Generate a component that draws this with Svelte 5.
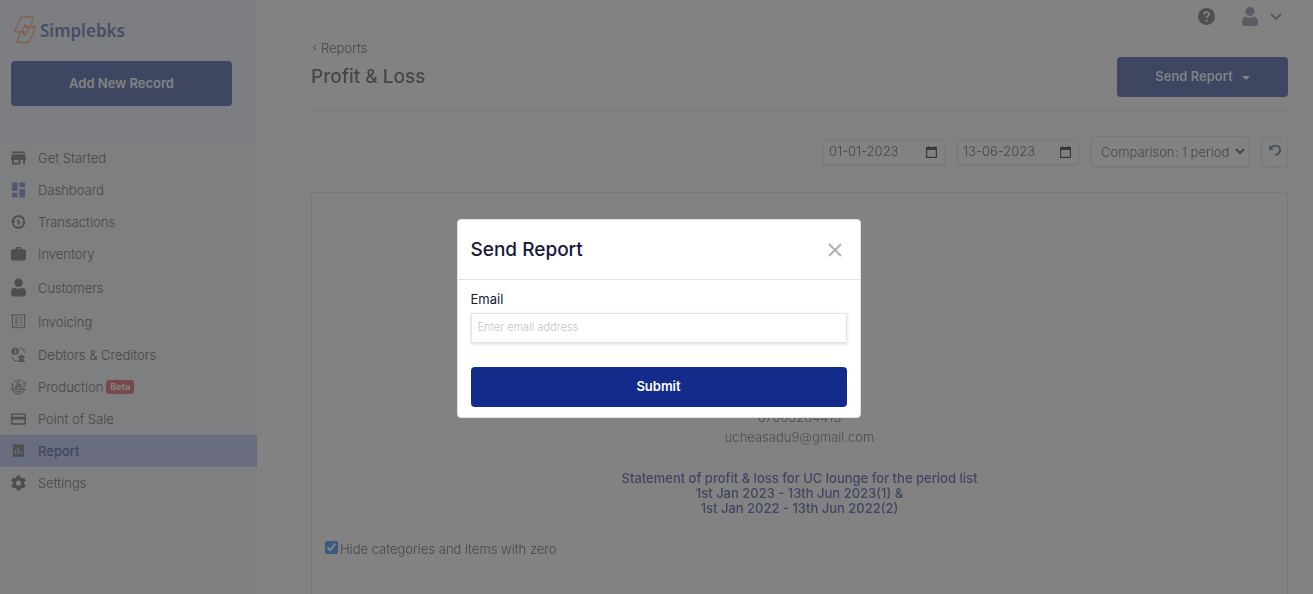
<script>
  let showModal = true;
  let email = '';
  let dateFrom = '01-01-2023';
  let dateTo = '13-06-2023';
  let comparison = 'Comparison: 1 period';
  let hideZero = true;

  const navItems = [
    { label: 'Get Started', icon: 'store', height: 16 },
    { label: 'Dashboard', icon: 'dashboard', height: 16 },
    { label: 'Transactions', icon: 'transactions', height: 16 },
    { label: 'Inventory', icon: 'bag', height: 16 },
    { label: 'Customers', icon: 'user', height: 21, viewBox: '0 0 16 19' },
    { label: 'Invoicing', icon: 'invoice', height: 19 },
    { label: 'Debtors & Creditors', icon: 'debtors', height: 19 },
    { label: 'Production', icon: 'production', height: 16, badge: 'Beta' },
    { label: 'Point of Sale', icon: 'card', height: 16 },
    { label: 'Report', icon: 'chart', height: 16, active: true },
    { label: 'Settings', icon: 'gear', height: 16 }
  ];

  function closeModal() {
    showModal = false;
  }

  function openModal() {
    showModal = true;
  }
</script>

<div class="page">
  <aside class="sidebar">
    <div class="brand-area">
      <a class="logo" href="#home">
        <svg width="22" height="28" viewBox="0 0 22 28" fill="none" stroke="#f58a48" stroke-width="1.3" stroke-linejoin="round">
          <path d="M8.500 1h9.500q1.500 0 1 1.500L17 9M11.500 16H2q-1.500 0-1-1.500L6.500 2.500Q7 1 8.500 1" />
          <path d="M11 11h9q1.500 0 1 1.500L15.500 25q-.6 1.500-2 1.500H4q-1.500 0-1-1.500l3.500-9" />
          <path d="M11.500 8.500l3.500 4-4 7-3.500-4z" />
        </svg>
        <span>Simplebks</span>
      </a>
      <button type="button" class="primary add-record">Add New Record</button>
    </div>

    <nav>
      {#each navItems as item}
        <a class="nav-item" class:active={item.active} href="#{item.icon}">
          <svg
            class="nav-icon"
            class:blue={item.icon === 'dashboard'}
            width="15"
            height={item.height}
            viewBox={item.viewBox || '0 0 16 16'}
          >
            {#if item.icon === 'store'}
              <path d="M1 1h14v2H1zM1 4h14l1 5v1h-1v5h-2v-5h-3v5H1v-5H0V9zM3 10v3h5v-3z" fill-rule="evenodd" />
            {:else if item.icon === 'dashboard'}
              <path d="M1 0h6v9H1zM9 0h6v5H9zM1 11h6v5H1zM9 7h6v9H9z" />
            {:else if item.icon === 'transactions'}
              <g fill="none" stroke="currentColor" stroke-width="2">
                <path d="M2 7C3 .5 12.500 0 14 6.500M14 9c-1 6.500-10.500 7-12 .5" />
              </g>
              <path d="M0 7h4.500L2 10zM11.500 9H16l-2.200-3z" />
              <path d="M9.300 6.200H7.500a.9.9 0 0 0 0 1.800h1a.9.9 0 0 1 0 1.800H6.700M8 5v6" fill="none" stroke="currentColor" />
            {:else if item.icon === 'bag'}
              <path d="M5 3V1.500L6 .5h4l1 1V3h3.500L16 4.500v9L14.500 15h-13L0 13.500v-9L1.500 3zM6.500 3h3V2h-3z" fill-rule="evenodd" />
            {:else if item.icon === 'user'}
              <circle cx="8" cy="4.500" r="4.500" />
              <path d="M3.500 9.500c2.500 1.700 6.500 1.700 9 0C15 10 16 12.500 16 16c0 2-1 3-3 3H3c-2 0-3-1-3-3 0-3.500 1-6 3.500-6.500z" />
            {:else if item.icon === 'invoice'}
              <g fill="none" stroke="currentColor">
                <path d="M0 1h16M1.500 1v14l1.600-1.200L4.700 15l1.600-1.200L8 15l1.600-1.200L11.200 15l1.600-1.200 1.700 1.200V1" />
                <path d="M4 4h4M10 4h2M4 6.500h4M10 6.500h2M4 9h4M10 9h2M4 11.500h4M10 11.500h2" />
              </g>
            {:else if item.icon === 'debtors'}
              <circle cx="4.500" cy="4.500" r="3.800" />
              <path d="M5.800 3H4a.8.800 0 0 0 0 1.500h1a.8.800 0 0 1 0 1.600H3.200M4.500 2v5" fill="none" stroke="#f0f4fa" stroke-width=".8" />
              <path d="M9 1c3 0 5.500 2.500 5.500 5.500M1 10c.3 3 2 4.500 5.500 5" fill="none" stroke="currentColor" />
              <path d="M7.500 10.500L11 8l3.500 2.500v1h-7zM8.500 12h5v2h-5zM7.500 14.500h7V16h-7z" />
            {:else if item.icon === 'production'}
              <g fill="none" stroke="currentColor">
                <path d="M3 3c3-3 8-3 10.500 0M0 4.500l3 1M1.500 6v3L0 10.500h16M2 11c1 6 11 6 12 0M4 13h8M6 10V7H4.500v3M6 7l4-2v5M8 7.500h3M12 6l3-3v3l-3 4" />
                <circle cx="7.500" cy="4.500" r="1.500" />
              </g>
            {:else if item.icon === 'card'}
              <path d="M1 2h14l1 1v10l-1 1H1l-1-1V3zM1.500 3.500v2h13v-2zM1.500 8.500v4h13v-4z" fill-rule="evenodd" />
            {:else if item.icon === 'chart'}
              <path d="M2 1h12v13H2zM4 7v4h1.500V7zM7 4v7h1.500V4zM10 8.500V11h1.500V8.500z" fill-rule="evenodd" />
            {:else}
              <path d="M6.200 0h3.600l.5 2.200 1.400.8 2.200-.7 1.800 3.100L14 7v2l1.700 1.600-1.800 3.100-2.200-.7-1.400.8-.5 2.200H6.200l-.5-2.200-1.400-.8-2.200.7-1.800-3.100L2 9V7L.3 5.400l1.800-3.100 2.200.7 1.400-.8zM8 5.200a2.800 2.800 0 1 0 0 5.600 2.800 2.800 0 0 0 0-5.600z" fill-rule="evenodd" />
            {/if}
          </svg>
          <span>{item.label}</span>
          {#if item.badge}
            <span class="badge">{item.badge}</span>
          {/if}
        </a>
      {/each}
    </nav>
  </aside>

  <main>
    <div class="topbar">
      <button type="button" class="icon-button" aria-label="Help">
        <svg width="17" height="17" viewBox="0 0 17 17">
          <circle cx="8.500" cy="8.500" r="8.500" fill="#4c4c4c" />
          <path d="M6 6.500C6 3.400 11 3.500 11 6.400c0 1.900-2.500 1.700-2.500 3.600" fill="none" stroke="#fff" stroke-width="1.800" />
          <circle cx="8.500" cy="12.600" r="1.200" fill="#fff" />
        </svg>
      </button>
      <button type="button" class="icon-button account" aria-label="Account">
        <svg width="16" height="19" viewBox="0 0 16 19" fill="#707c92">
          <circle cx="8" cy="4.500" r="4.500" />
          <path d="M3.500 9.500c2.500 1.700 6.500 1.700 9 0C15 10 16 12.500 16 16c0 2-1 3-3 3H3c-2 0-3-1-3-3 0-3.500 1-6 3.500-6.500z" />
        </svg>
        <svg width="12" height="7" viewBox="0 0 12 7" fill="none" stroke="#707c92" stroke-width="2">
          <path d="M1 1l5 5 5-5" />
        </svg>
      </button>
    </div>

    <header>
      <div>
        <a class="back" href="#reports">
          <svg width="5" height="7" viewBox="0 0 5 7" fill="none" stroke="currentColor">
            <path d="M4 1L1.500 3.500 4 6" />
          </svg>
          Reports
        </a>
        <h1>Profit &amp; Loss</h1>
      </div>
      <button type="button" class="primary send" on:click={openModal}>
        Send Report <span class="caret"></span>
      </button>
    </header>

    <div class="filters">
      <div class="date">
        <input type="text" aria-label="Start date" bind:value={dateFrom} />
        <button type="button" class="icon-button" aria-label="Pick start date">
          <svg width="11" height="12" viewBox="0 0 11 12">
            <path d="M0 1h2V0h1v1h5V0h1v1h2v11H0zM1.200 4v6.800h8.600V4z" fill-rule="evenodd" />
          </svg>
        </button>
      </div>
      <div class="date">
        <input type="text" aria-label="End date" bind:value={dateTo} />
        <button type="button" class="icon-button" aria-label="Pick end date">
          <svg width="11" height="12" viewBox="0 0 11 12">
            <path d="M0 1h2V0h1v1h5V0h1v1h2v11H0zM1.200 4v6.800h8.600V4z" fill-rule="evenodd" />
          </svg>
        </button>
      </div>
      <select aria-label="Comparison" bind:value={comparison}>
        <option>Comparison: 1 period</option>
        <option>Comparison: 2 periods</option>
      </select>
      <button type="button" class="reset" aria-label="Reset filters">
        <svg width="12" height="12" viewBox="0 0 12 12" fill="none" stroke="#3c4f9e" stroke-width="2">
          <path d="M1.500 4.500C4 .5 11 1 11 6c0 3-2.500 5-5 5" />
          <path d="M0 1v5h5z" fill="#3c4f9e" stroke="none" />
        </svg>
      </button>
    </div>

    <section class="statement">
      <address>
        <span>07063284413</span>
        <span>ucheasadu9@gmail.com</span>
      </address>
      <h2>
        Statement of profit &amp; loss for UC lounge for the period list<br />
        1st Jan 2023 - 13th Jun 2023(1) &amp;<br />
        1st Jan 2022 - 13th Jun 2022(2)
      </h2>
      <label class="hide-zero">
        <input type="checkbox" bind:checked={hideZero} />
        <span>Hide categories and items with zero</span>
      </label>
    </section>
  </main>
</div>

{#if showModal}
  <div class="backdrop">
    <div class="modal" role="dialog" aria-modal="true" aria-labelledby="modal-title">
      <div class="modal-header">
        <h3 id="modal-title">Send Report</h3>
        <button type="button" class="icon-button" aria-label="Close" on:click={closeModal}>
          <svg width="14" height="14" viewBox="0 0 14 14" fill="none" stroke="#afb0b3" stroke-width="2">
            <path d="M1 1l12 12M13 1L1 13" />
          </svg>
        </button>
      </div>
      <form class="modal-body" on:submit|preventDefault={closeModal}>
        <label for="email">Email</label>
        <input id="email" type="email" placeholder="Enter email address" bind:value={email} />
        <button type="submit" class="primary submit">Submit</button>
      </form>
    </div>
  </div>
{/if}

<style>
  :global(body) {
    background: #fff;
    overflow: hidden;
  }
  .page,
  .backdrop {
    font-family: Inter, 'Liberation Sans', sans-serif;
    font-size: 13px;
    font-weight: 300;
  }
  .page {
    display: flex;
    height: 100vh;
    overflow: hidden;
    opacity: 0.56;
    color: #2c2e38;
  }
  button,
  input,
  select {
    font: inherit;
    box-sizing: border-box;
  }
  a {
    color: inherit;
    text-decoration: none;
  }
  .primary {
    border: 0;
    border-radius: 4px;
    padding: 0 0 2px;
    background: #132b8a;
    color: #fff;
    font-size: 13px;
    font-weight: 600;
    cursor: pointer;
  }
  .icon-button {
    display: flex;
    align-items: center;
    padding: 0;
    border: 0;
    background: transparent;
    cursor: pointer;
  }

  .sidebar {
    flex: 0 0 257px;
    background: #f0f4fa;
  }
  .brand-area {
    height: 142px;
    box-sizing: border-box;
    padding: 16px 25px 0 11px;
    background: #e9f0fc;
  }
  .logo {
    display: flex;
    align-items: center;
    gap: 4px;
    height: 28px;
    padding-left: 3px;
    color: #35439b;
    font-family: 'Noto Sans', sans-serif;
    font-size: 17px;
    font-weight: 600;
  }
  .add-record {
    width: 100%;
    height: 45px;
    margin-top: 17px;
  }
  nav {
    display: flex;
    flex-direction: column;
  }
  .nav-item {
    display: flex;
    align-items: center;
    min-height: 32px;
    box-sizing: border-box;
    padding: 7px 11px;
    line-height: 18px;
  }
  .nav-icon {
    margin-right: 12px;
    fill: currentColor;
    color: #484b54;
  }
  .nav-icon.blue {
    color: #5a6cba;
  }
  .nav-item.active {
    background: #acb6f0;
    color: #132b8a;
    font-weight: 500;
  }
  .badge {
    margin-left: 3px;
    padding: 0 4px;
    border-radius: 3px;
    background: #dc3545;
    color: #fff;
    font-size: 9px;
    font-weight: 700;
    line-height: 14px;
  }

  main {
    flex: 1;
    min-width: 0;
    padding: 0 25px 0 54px;
  }
  .topbar {
    display: flex;
    justify-content: flex-end;
    align-items: center;
    gap: 27px;
    height: 33px;
    padding-right: 6px;
  }
  .account {
    gap: 12px;
  }
  header {
    display: flex;
    justify-content: space-between;
    height: 78px;
    box-sizing: border-box;
    padding-top: 5px;
    border-bottom: 1px solid #dcdfe4;
  }
  .back {
    display: inline-flex;
    align-items: center;
    gap: 4px;
    padding-left: 1px;
    line-height: 16px;
  }
  h1 {
    margin: 9px 0 0;
    font-size: 19px;
    font-weight: 500;
    line-height: 24px;
  }
  .send {
    display: flex;
    justify-content: center;
    align-items: center;
    gap: 9px;
    width: 171px;
    height: 40px;
    margin-top: 19px;
  }
  .caret {
    margin-top: 3px;
    border: 4px solid transparent;
    border-top-color: #fff;
    border-bottom: 0;
  }
  .filters {
    display: flex;
    justify-content: flex-end;
    align-items: center;
    gap: 12px;
    height: 81px;
  }
  .date,
  .filters select,
  .reset {
    border: 1px solid #dfe2e8;
    border-radius: 3px;
    background: #fff;
    box-shadow: 0 1px 3px rgba(0, 0, 0, 0.12);
  }
  .date {
    display: flex;
    align-items: center;
    justify-content: space-between;
    width: 122px;
    height: 26px;
    box-sizing: border-box;
    padding: 0 7px 0 5px;
  }
  .date input {
    width: 84px;
    padding: 0 0 2px;
    border: 0;
    background: transparent;
    color: inherit;
  }
  .filters select {
    width: 158px;
    height: 31px;
    padding-left: 5px;
    color: inherit;
  }
  .reset {
    display: flex;
    justify-content: center;
    align-items: center;
    width: 27px;
    height: 30px;
    padding: 0 0 4px;
  }
  .statement {
    height: 100vh;
    padding: 214px 13px 0;
    border: 1px solid #dcdfe4;
    border-radius: 3px;
  }
  address {
    display: flex;
    flex-direction: column;
    align-items: center;
    color: #484848;
    font-style: normal;
    line-height: 20px;
  }
  h2 {
    margin: 24px 0 0;
    color: #132b8a;
    font-size: 13px;
    font-weight: 500;
    line-height: 15px;
    text-align: center;
  }
  .hide-zero {
    display: inline-flex;
    align-items: center;
    gap: 2px;
    margin-top: 23px;
    line-height: 20px;
  }
  .hide-zero input {
    width: 13px;
    height: 13px;
    margin: 0 0 3px;
  }

  .backdrop {
    position: fixed;
    inset: 0;
    display: flex;
    justify-content: center;
    align-items: center;
    padding: 43px 0 0 4px;
    background: rgba(0, 0, 0, 0.49);
  }
  .modal {
    width: 404px;
    box-sizing: border-box;
    border: 1px solid #dfe2ea;
    border-radius: 4px;
    background: #fff;
    color: #14183a;
  }
  .modal-header {
    display: flex;
    justify-content: space-between;
    align-items: center;
    height: 59px;
    padding: 0 18px 0 13px;
    border-bottom: 1px solid #dfe2ea;
  }
  h3 {
    margin: 0;
    font-size: 19px;
    font-weight: 500;
  }
  .modal-body {
    display: flex;
    flex-direction: column;
    padding: 10px 13px;
  }
  .modal-body label {
    line-height: 18px;
    font-weight: 400;
  }
  .modal-body input {
    height: 30px;
    margin-top: 5px;
    padding: 0 6px 2px;
    border: 1px solid #dfe2ea;
    box-shadow: 0 1px 3px rgba(20, 30, 60, 0.15);
    font-size: 11px;
  }
  .modal-body input::placeholder {
    color: #c5c5c9;
  }
  .submit {
    height: 40px;
    margin-top: 24px;
  }
</style>
